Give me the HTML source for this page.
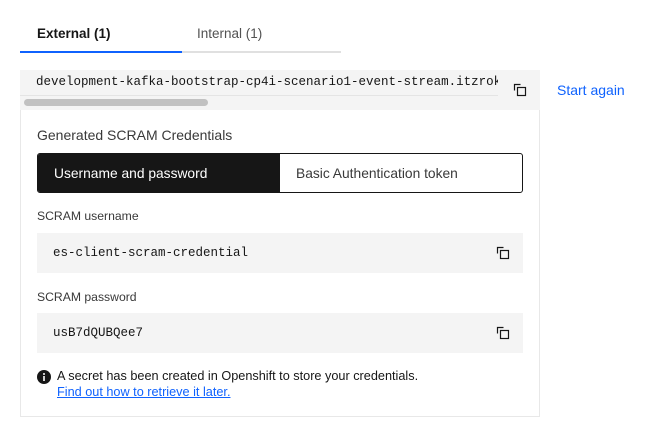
<!DOCTYPE html>
<html><head><style>
*{box-sizing:border-box;margin:0;padding:0}
body{width:664px;height:442px;background:#fff;font-family:"Liberation Sans",sans-serif;color:#161616;position:relative;overflow:hidden}
.a{position:absolute}
.mono{font-family:"Liberation Mono",monospace;font-size:12.5px;color:#161616}
.lbl{font-size:12.2px;color:#393939}
svg.c{position:absolute;width:16px;height:16px}
</style></head><body>
<div class="a" style="left:37px;top:26px;font-size:13.5px;font-weight:bold;color:#161616">External (1)</div>
<div class="a" style="left:197px;top:26px;font-size:13.5px;color:#525252">Internal (1)</div>
<div class="a" style="left:20px;top:51px;width:321px;height:2px;background:#e0e0e0"></div>
<div class="a" style="left:20px;top:51px;width:162px;height:2px;background:#0f62fe"></div>

<div class="a" style="left:20px;top:110px;width:520px;height:307px;border:1px solid #e8e8e8;border-top:none"></div>
<div class="a" style="left:20px;top:70px;width:520px;height:40px;background:#f4f4f4;overflow:hidden">
 <div class="mono a" style="left:16px;top:5px;white-space:nowrap;font-size:12.5px">development-kafka-bootstrap-cp4i-scenario1-event-stream.itzrok</div>
 <div class="a" style="left:0;top:25px;width:486px;height:1px;background:#e4e4e4"></div>
 <div class="a" style="left:4px;top:29px;width:184px;height:7px;border-radius:4px;background:#c1c1c1"></div>
 <div class="a" style="left:478px;top:0;width:42px;height:40px;background:#f4f4f4"></div>
</div>
<svg class="c" style="left:512px;top:82px" viewBox="0 0 16 16" fill="none" stroke="#161616" stroke-width="1.2"><rect x="5.5" y="5.5" width="8" height="8"/><path d="M2.5 8.5V2.5H8.5"/></svg>
<div class="a" style="left:557px;top:82px;font-size:14px;color:#0f62fe">Start again</div>

<div class="a lbl" style="left:37px;top:127px;font-size:14px">Generated SCRAM Credentials</div>
<div class="a" style="left:37px;top:153px;width:486px;height:40px;border:1px solid #161616;border-radius:3px;overflow:hidden">
 <div class="a" style="left:0;top:0;width:242px;height:40px;background:#161616"></div>
 <div class="a" style="left:16px;top:12px;font-size:13.8px;color:#fff">Username and password</div>
 <div class="a" style="left:258px;top:12px;font-size:13.8px;color:#393939">Basic Authentication token</div>
</div>

<div class="a lbl" style="left:37px;top:209px">SCRAM username</div>
<div class="a" style="left:37px;top:233px;width:486px;height:40px;background:#f4f4f4"></div>
<div class="a mono" style="left:53px;top:246px">es-client-scram-credential</div>
<svg class="c" style="left:495px;top:245px" viewBox="0 0 16 16" fill="none" stroke="#161616" stroke-width="1.2"><rect x="5.5" y="5.5" width="8" height="8"/><path d="M2.5 8.5V2.5H8.5"/></svg>

<div class="a lbl" style="left:37px;top:290px">SCRAM password</div>
<div class="a" style="left:37px;top:313px;width:486px;height:40px;background:#f4f4f4"></div>
<div class="a mono" style="left:53px;top:326px">usB7dQUBQee7</div>
<svg class="c" style="left:495px;top:325px" viewBox="0 0 16 16" fill="none" stroke="#161616" stroke-width="1.2"><rect x="5.5" y="5.5" width="8" height="8"/><path d="M2.5 8.5V2.5H8.5"/></svg>

<svg class="a" style="left:37px;top:370px;width:14px;height:14px" viewBox="0 0 14 14"><circle cx="7" cy="7" r="7" fill="#161616"/><rect x="6.2" y="6" width="1.6" height="5" fill="#fff"/><circle cx="7" cy="4" r="1" fill="#fff"/></svg>
<div class="a" style="left:57px;top:369px;font-size:12.7px;color:#161616">A secret has been created in Openshift to store your credentials.</div>
<div class="a" style="left:57px;top:385px;font-size:12.7px;color:#0f62fe;text-decoration:underline">Find out how to retrieve it later.</div>
</body></html>
